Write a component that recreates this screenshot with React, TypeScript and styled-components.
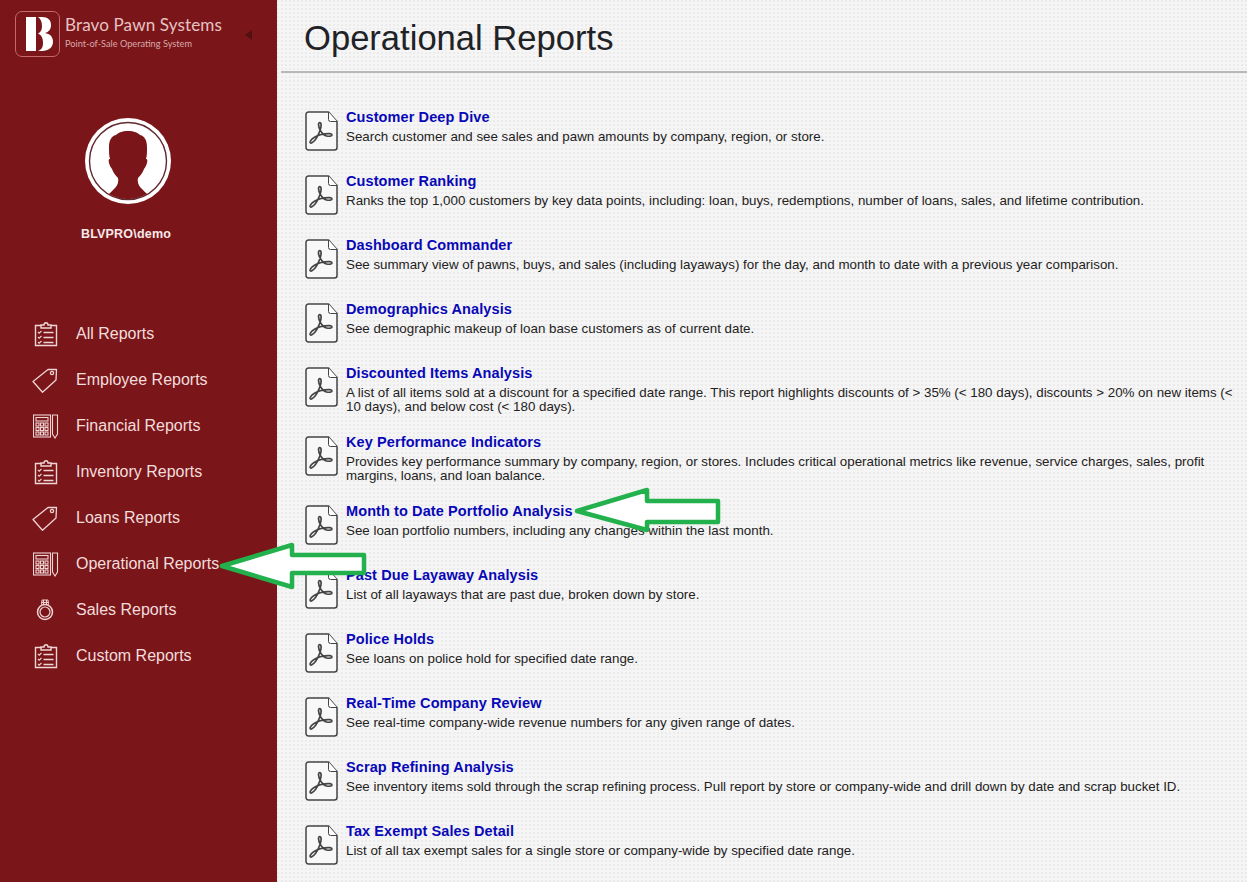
import React from "react";
import styled, { createGlobalStyle } from "styled-components";

const Global = createGlobalStyle`
  html, body { margin: 0; padding: 0; height: 100%; }
  body { font-family: "Liberation Sans", Arial, sans-serif; background: #f6f5f5; overflow: hidden; }
`;

const Page = styled.div`
  position: relative;
  display: flex;
  width: 1247px;
  height: 882px;
  overflow: hidden;
`;

const Sidebar = styled.aside`
  width: 277px;
  flex: none;
  background: #7a1519;
  display: flex;
  flex-direction: column;
`;

const Brand = styled.div`
  display: flex;
  align-items: flex-start;
  height: 118px;
  padding: 11px 0 0 15px;
  box-sizing: border-box;
  color: #e6c3c3;
`;

const LogoBox = styled.div`
  width: 45px;
  height: 46px;
  flex: none;
  box-sizing: border-box;
  border: 1px solid #c4696d;
  border-radius: 7px;
  display: flex;
  align-items: center;
  justify-content: center;
  padding-left: 3px;
`;

const BrandText = styled.div`
  margin-left: 5px;
  padding-top: 4px;
  width: 160px;
`;

const BrandName = styled.div`
  font-family: Lato, "Open Sans", sans-serif;
  font-size: 17.1px;
  line-height: 20px;
  white-space: nowrap;
  letter-spacing: 0.1px;
`;

const BrandSub = styled.div`
  font-family: Lato, "Open Sans", sans-serif;
  font-size: 9.2px;
  line-height: 11px;
  margin-top: 3px;
  white-space: nowrap;
  color: #d9a9a9;
`;

const Collapse = styled.div`
  margin: 19px 0 0 20px;
  width: 0;
  height: 0;
  border-style: solid;
  border-width: 5px 7px 5px 0;
  border-color: transparent #521013 transparent transparent;
`;

const Profile = styled.div`
  display: flex;
  flex-direction: column;
  align-items: center;
  width: 256px;
  height: 189px;
`;

const UserName = styled.div`
  margin: 22px 4px 0 0;
  font-size: 12.5px;
  line-height: 16px;
  font-weight: 700;
  color: #f6e9e9;
  letter-spacing: 0.2px;
`;

const Nav = styled.nav`
  display: flex;
  flex-direction: column;
  padding-top: 4px;
`;

const NavItem = styled.a`
  display: flex;
  align-items: center;
  height: 46px;
  padding-left: 30px;
  color: #f2dddd;
  font-size: 16px;
  text-decoration: none;
`;

const NavIconWrap = styled.span<{ $offset: number }>`
  width: 46px;
  flex: none;
  box-sizing: border-box;
  padding-left: ${(p) => p.$offset}px;
  display: flex;
  align-items: center;
`;

const Main = styled.main`
  flex: 1;
  min-width: 0;
  background-color: #f6f5f5;
  background-image: radial-gradient(circle at 1px 1px, #ecebeb 0.9px, transparent 1.1px);
  background-size: 4px 4px;
`;

const TitleBar = styled.header`
  height: 73px;
  margin-left: 4px;
  box-sizing: border-box;
  border-bottom: 2px solid #b9b8b8;
  padding: 18px 0 0 23px;
`;

const Title = styled.h1`
  margin: 0;
  font-size: 34.6px;
  line-height: 40px;
  font-weight: 400;
  color: #1f2226;
`;

const ReportList = styled.div`
  display: flex;
  flex-direction: column;
  padding: 34px 0 0 28px;
`;

const Report = styled.article<{ $height: number }>`
  display: flex;
  height: ${(p) => p.$height}px;
  box-sizing: border-box;
`;

const PdfWrap = styled.div`
  width: 41px;
  flex: none;
  padding-top: 4px;
`;

const ReportBody = styled.div`
  min-width: 0;
`;

const ReportTitle = styled.a`
  display: block;
  font-size: 14.5px;
  line-height: 20px;
  font-weight: 700;
  color: #0808b8;
  text-decoration: none;
  letter-spacing: 0.1px;
`;

const ReportDesc = styled.p`
  margin: 0;
  font-size: 13.33px;
  line-height: 14px;
  padding-top: 3px;
  color: #222;
  white-space: nowrap;
`;

const ArrowSvg = styled.svg<{ $x: number; $y: number }>`
  position: absolute;
  left: ${(p) => p.$x}px;
  top: ${(p) => p.$y}px;
  overflow: visible;
  z-index: 5;
`;

const Clipboard = () => (
  <svg width="26" height="26" viewBox="0 0 26 26" fill="none" stroke="#f0d5d5" strokeWidth="1.4">
    <path d="M7 4.500H1.500v20h21v-20H17" />
    <path d="M7 7V4h3c0-3 4-3 4 0h3v3z" />
    <path d="M4 11l1.200 1.200L7.500 10M4 16l1.200 1.200L7.500 15M4 21l1.200 1.200L7.500 20" strokeWidth="1.1" />
    <path d="M9.500 11.500h10M9.500 16.500h10M9.500 21.500h10" />
  </svg>
);

const Tag = () => (
  <svg width="26" height="26" viewBox="0 0 26 26" fill="none" stroke="#f0d5d5" strokeWidth="1.3">
    <path d="M1 14.500L16 2.500h8.500L24 13 10.500 25.200z" strokeLinejoin="round" />
    <circle cx="20" cy="6" r="1.600" />
  </svg>
);

const Calculator = () => (
  <svg width="26" height="26" viewBox="0 0 26 26" fill="none" stroke="#f0d5d5" strokeWidth="1.1">
    <rect x="0.5" y="2" width="17" height="22" />
    <rect x="3" y="4.500" width="12" height="3.500" />
    {[10, 14.5, 19].map((y) =>
      [3, 7.5, 12].map((x) => <rect key={`${x}-${y}`} x={x} y={y} width="3" height="3" />)
    )}
    <path d="M19.500 2h5v19l-2.500 4-2.500-4z" />
  </svg>
);

const Ring = () => (
  <svg width="26" height="26" viewBox="0 0 26 26" fill="none" stroke="#f0d5d5" strokeWidth="1.2">
    <circle cx="13" cy="15" r="7.500" strokeWidth="1.500" />
    <circle cx="13" cy="15" r="5" />
    <path d="M9.500 7.500L10 3h6l.5 4.500M9.500 5.500h7M11.500 3v4M14.500 3v4" strokeWidth="1" />
  </svg>
);

const PdfIcon = () => (
  <svg width="33" height="40" viewBox="0 0 33 40" fill="none" stroke="#444" strokeWidth="1.5">
    <path d="M3.500 1h20l8.500 9.500V36.500a2.500 2.500 0 0 1-2.500 2.500H3.500A2.500 2.500 0 0 1 1 36.500V3.500A2.500 2.500 0 0 1 3.500 1z" strokeLinejoin="round" fill="#f8f8f8" />
    <path d="M23.500 1v7.500a2 2 0 0 0 2 2h6.500" fill="#fff" strokeWidth="1" />
    <path
      d="M6.500 32c2-1 5.500-5 7.500-10 1.500-3.500 2.500-6.500 2-9-.4-2-2.400-2-2.500.3-.2 4 4 11 8 11.700 2.500.4 5.500.4 5.500-1 0-1.500-3.500-1.600-7-1.200-4.500.5-9.500 2.200-12.500 4.800-3 2.500-3 4.800-1 4.400z"
      strokeWidth="1.700"
    />
  </svg>
);

const Logo = () => (
  <svg width="27" height="36" viewBox="0 0 27 36" fill="#fff">
    <path d="M0 1h10v34H0z" />
    <path d="M12 1h4c6 0 9 3 9 8 0 4-2 7-6 8 5 .8 8 4 8 8.500 0 6-4.500 9.500-11 9.500h-4c3-1 5-3 5-8 0-5-1.500-8-5-9.500 3-1.500 4-4 4-7.500 0-4-1.500-7.500-4-9z" />
  </svg>
);

const Avatar = () => (
  <svg width="86" height="86" viewBox="0 0 86 86">
    <circle cx="43" cy="43" r="43" fill="#fff" />
    <circle cx="43" cy="43" r="38.500" fill="none" stroke="#5f2a30" strokeWidth="1.400" />
    <path
      fill="#7a1519"
      d="M43 13C37 13 33 15 31 17C26 18 24 23 24 29C24 34 24 38 25 41C23 40 23 46 27 51C28 54 30 57 33 60C34 65 32 68 29 71C27 73 25 75 24 76A38 38 0 0 0 62 76C61 75 59 73 57 71C54 68 52 65 53 60C56 57 58 54 59 51C63 46 63 40 61 41C62 38 62 34 62 29C62 23 60 18 55 17C53 15 49 13 43 13z"
    />
  </svg>
);

type Kind = "clip" | "tag" | "calc" | "ring";
const navIcons: Record<Kind, { el: React.ReactElement; offset: number }> = {
  clip: { el: <Clipboard />, offset: 4 },
  tag: { el: <Tag />, offset: 2 },
  calc: { el: <Calculator />, offset: 3 },
  ring: { el: <Ring />, offset: 2 },
};

const navItems: { label: string; icon: Kind }[] = [
  { label: "All Reports", icon: "clip" },
  { label: "Employee Reports", icon: "tag" },
  { label: "Financial Reports", icon: "calc" },
  { label: "Inventory Reports", icon: "clip" },
  { label: "Loans Reports", icon: "tag" },
  { label: "Operational Reports", icon: "calc" },
  { label: "Sales Reports", icon: "ring" },
  { label: "Custom Reports", icon: "clip" },
];

const reports: { title: string; desc: React.ReactNode; height?: number }[] = [
  { title: "Customer Deep Dive", desc: "Search customer and see sales and pawn amounts by company, region, or store." },
  { title: "Customer Ranking", desc: "Ranks the top 1,000 customers by key data points, including: loan, buys, redemptions, number of loans, sales, and lifetime contribution." },
  { title: "Dashboard Commander", desc: "See summary view of pawns, buys, and sales (including layaways) for the day, and month to date with a previous year comparison." },
  { title: "Demographics Analysis", desc: "See demographic makeup of loan base customers as of current date." },
  {
    title: "Discounted Items Analysis",
    height: 68.5,
    desc: (
      <>
        A list of all items sold at a discount for a specified date range. This report highlights discounts of &gt; 35% (&lt; 180 days), discounts &gt; 20% on new items (&lt;
        <br />
        10 days), and below cost (&lt; 180 days).
      </>
    ),
  },
  {
    title: "Key Performance Indicators",
    height: 69.5,
    desc: (
      <>
        Provides key performance summary by company, region, or stores. Includes critical operational metrics like revenue, service charges, sales, profit
        <br />
        margins, loans, and loan balance.
      </>
    ),
  },
  { title: "Month to Date Portfolio Analysis", desc: "See loan portfolio numbers, including any changes within the last month." },
  { title: "Past Due Layaway Analysis", desc: "List of all layaways that are past due, broken down by store." },
  { title: "Police Holds", desc: "See loans on police hold for specified date range." },
  { title: "Real-Time Company Review", desc: "See real-time company-wide revenue numbers for any given range of dates." },
  { title: "Scrap Refining Analysis", desc: "See inventory items sold through the scrap refining process. Pull report by store or company-wide and drill down by date and scrap bucket ID." },
  { title: "Tax Exempt Sales Detail", desc: "List of all tax exempt sales for a single store or company-wide by specified date range." },
];

const Arrow = ({ x, y, d }: { x: number; y: number; d: string }) => (
  <ArrowSvg $x={x} $y={y} width="150" height="50">
    <path d={d} fill="#fff" stroke="#22b14c" strokeWidth="4.5" strokeLinejoin="round" />
  </ArrowSvg>
);

export default function App() {
  return (
    <Page>
      <Global />
      <Sidebar>
        <Brand>
          <LogoBox>
            <Logo />
          </LogoBox>
          <BrandText>
            <BrandName>Bravo Pawn Systems</BrandName>
            <BrandSub>Point-of-Sale Operating System</BrandSub>
          </BrandText>
          <Collapse />
        </Brand>
        <Profile>
          <Avatar />
          <UserName>BLVPRO\demo</UserName>
        </Profile>
        <Nav>
          {navItems.map((n) => (
            <NavItem key={n.label} href="#">
              <NavIconWrap $offset={navIcons[n.icon].offset}>{navIcons[n.icon].el}</NavIconWrap>
              {n.label}
            </NavItem>
          ))}
        </Nav>
      </Sidebar>
      <Main>
        <TitleBar>
          <Title>Operational Reports</Title>
        </TitleBar>
        <ReportList>
          {reports.map((r) => (
            <Report key={r.title} $height={r.height ?? 64}>
              <PdfWrap>
                <PdfIcon />
              </PdfWrap>
              <ReportBody>
                <ReportTitle href="#">{r.title}</ReportTitle>
                <ReportDesc>{r.desc}</ReportDesc>
              </ReportBody>
            </Report>
          ))}
        </ReportList>
      </Main>
      <Arrow x={222} y={545} d="M0 21L70 0V10H142V28H70V42z" />
      <Arrow x={577} y={490} d="M0 21L70 0V11H141V32H70V40z" />
    </Page>
  );
}
